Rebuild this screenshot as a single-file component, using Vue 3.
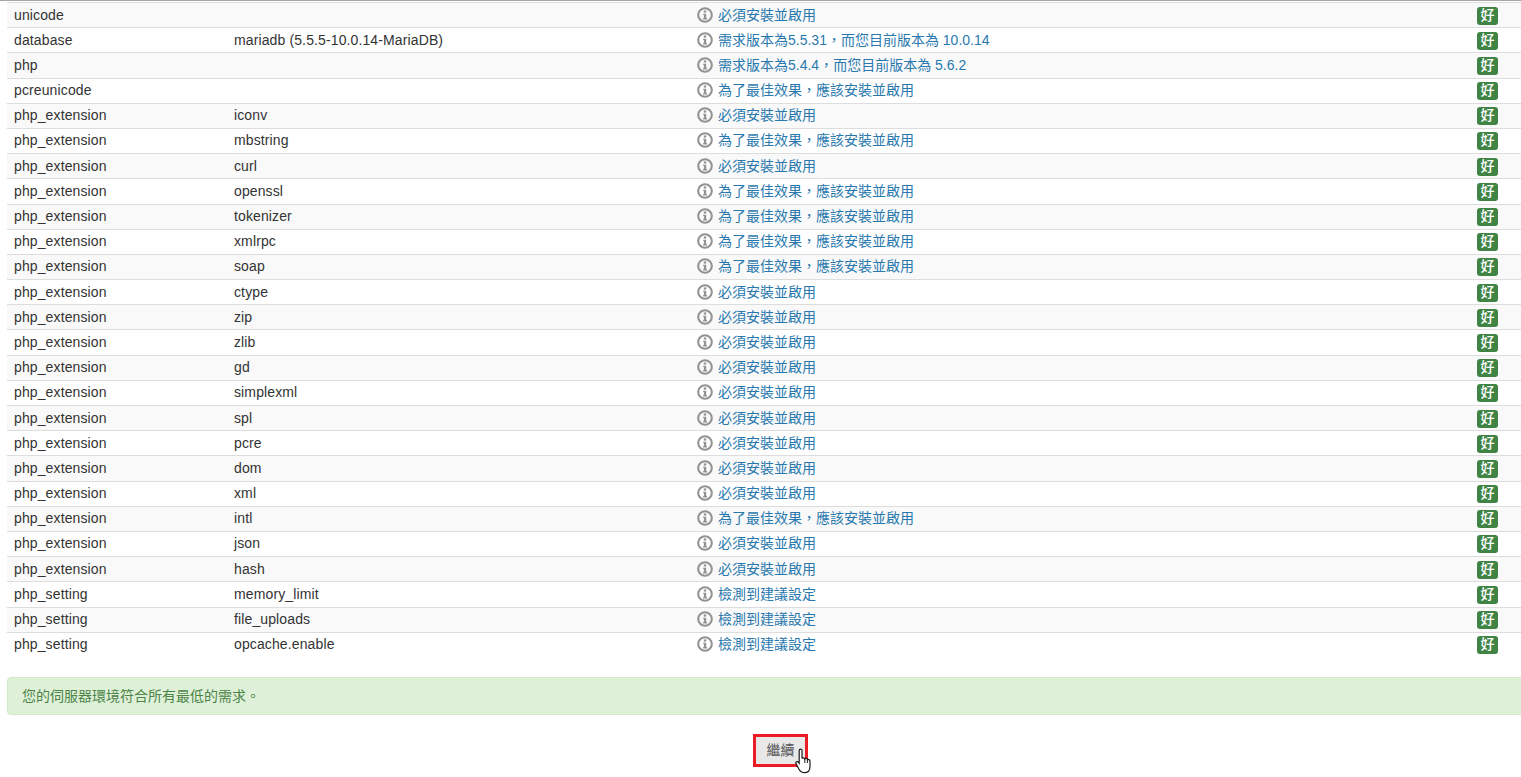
<script setup>
const must = '必須安裝並啟用'
const best = '為了最佳效果\uFF0C應該安裝並啟用'
const rec = '檢測到建議設定'
const rows = [
  ['unicode', '', must],
  ['database', 'mariadb (5.5.5-10.0.14-MariaDB)', '需求版本為5.5.31\uFF0C而您目前版本為 10.0.14'],
  ['php', '', '需求版本為5.4.4\uFF0C而您目前版本為 5.6.2'],
  ['pcreunicode', '', best],
  ['php_extension', 'iconv', must],
  ['php_extension', 'mbstring', best],
  ['php_extension', 'curl', must],
  ['php_extension', 'openssl', best],
  ['php_extension', 'tokenizer', best],
  ['php_extension', 'xmlrpc', best],
  ['php_extension', 'soap', best],
  ['php_extension', 'ctype', must],
  ['php_extension', 'zip', must],
  ['php_extension', 'zlib', must],
  ['php_extension', 'gd', must],
  ['php_extension', 'simplexml', must],
  ['php_extension', 'spl', must],
  ['php_extension', 'pcre', must],
  ['php_extension', 'dom', must],
  ['php_extension', 'xml', must],
  ['php_extension', 'intl', best],
  ['php_extension', 'json', must],
  ['php_extension', 'hash', must],
  ['php_setting', 'memory_limit', rec],
  ['php_setting', 'file_uploads', rec],
  ['php_setting', 'opcache.enable', rec],
]
</script>

<template>
  <div class="page">
    <div class="table">
      <div v-for="(r, i) in rows" :key="i" class="row">
        <div class="type">{{ r[0] }}</div>
        <div class="name">{{ r[1] }}</div>
        <div class="msg">
          <svg class="info" viewBox="0 0 16 16" width="16" height="16" aria-hidden="true">
            <circle cx="8" cy="8" r="6.8" fill="none" stroke="#939393" stroke-width="2.1" />
            <rect x="6.8" y="3.4" width="2.4" height="2.2" fill="#939393" />
            <path d="M6.2 6.7H9.2V11.1H10V12.6H6.1V11.1H6.9V8.1H6.2Z" fill="#939393" />
          </svg>
          <span class="msg-text">{{ r[2] }}</span>
        </div>
        <div class="state"><span class="label">好</span></div>
      </div>
    </div>
    <div class="alert">您的伺服器環境符合所有最低的需求。</div>
    <div class="actions">
      <button class="btn" type="button">
        繼續
        <svg class="cursor" viewBox="0 0 16 26" width="16" height="26" aria-hidden="true">
          <path d="M4.2 2.4C4.2 .8 7 .8 7 2.4V10.4C7.4 9.5 9.4 9.6 9.8 10.8C10.4 10.1 12.1 10.3 12.4 11.6C13 11.2 15 11.5 15 13.2V18.4C15 22 13 24.6 9.4 24.6C6.6 24.6 5.2 23.4 4 21.2L1 15.6C.2 14.1 2.2 12.8 3.3 14.1L4.2 15.2Z" fill="#fff" stroke="#1c1c1c" stroke-width="1.2" />
          <path d="M9.8 10.8V15M12.4 11.6V15" stroke="#1c1c1c" stroke-width="1" fill="none" />
        </svg>
      </button>
    </div>
  </div>
</template>

<style>
html, body { margin: 0; overflow: hidden; background: #fff; }
</style>

<style scoped>
.page {
  width: 1521px;
  height: 777px;
  overflow: hidden;
  font-family: "Liberation Sans", "Noto Sans CJK TC", sans-serif;
  font-size: 14px;
  line-height: 20px;
  color: #333;
}
.table {
  width: 1547px;
  border-top: 1px solid #a6a6a6;
  padding: 1px 0 0 7px;
}
.row {
  display: grid;
  grid-template-columns: 220px 463px 780px 77px;
  height: 25.2px;
  box-sizing: border-box;
  border-top: 1px solid #ddd;
  padding: 0 0 1.2px 7px;
  align-items: center;
}
.row:nth-child(odd) { background: #f9f9f9; }
.type, .name { letter-spacing: .12px; }
.msg { display: flex; align-items: center; color: #2878ae; }
.info { margin-right: 5px; flex: none; }
.msg-text { white-space: nowrap; }
.label {
  display: block;
  width: 21px;
  height: 18px;
  margin-top: 2px;
  border-radius: 3px;
  background: #3f8445;
  color: #fff;
  text-align: center;
  font-size: 14px;
  font-weight: 500;
  line-height: 16px;
}
.alert {
  width: 1540px;
  height: 38px;
  margin: 20px 0 0 7px;
  box-sizing: border-box;
  padding: 8px 14px;
  background: #dff0d8;
  border: 1px solid #d6e9c6;
  border-radius: 4px;
  color: #4c8448;
}
.actions { display: flex; justify-content: center; width: 1561px; padding-top: 19px; }
.btn {
  position: relative;
  width: 55px;
  height: 33px;
  box-sizing: border-box;
  padding: 0;
  border: 3px solid #ed1c24;
  background: #e8e8e8;
  color: #555;
  font: inherit;
  font-size: 14px;
}
.cursor { position: absolute; left: 39px; top: 11px; }
</style>
